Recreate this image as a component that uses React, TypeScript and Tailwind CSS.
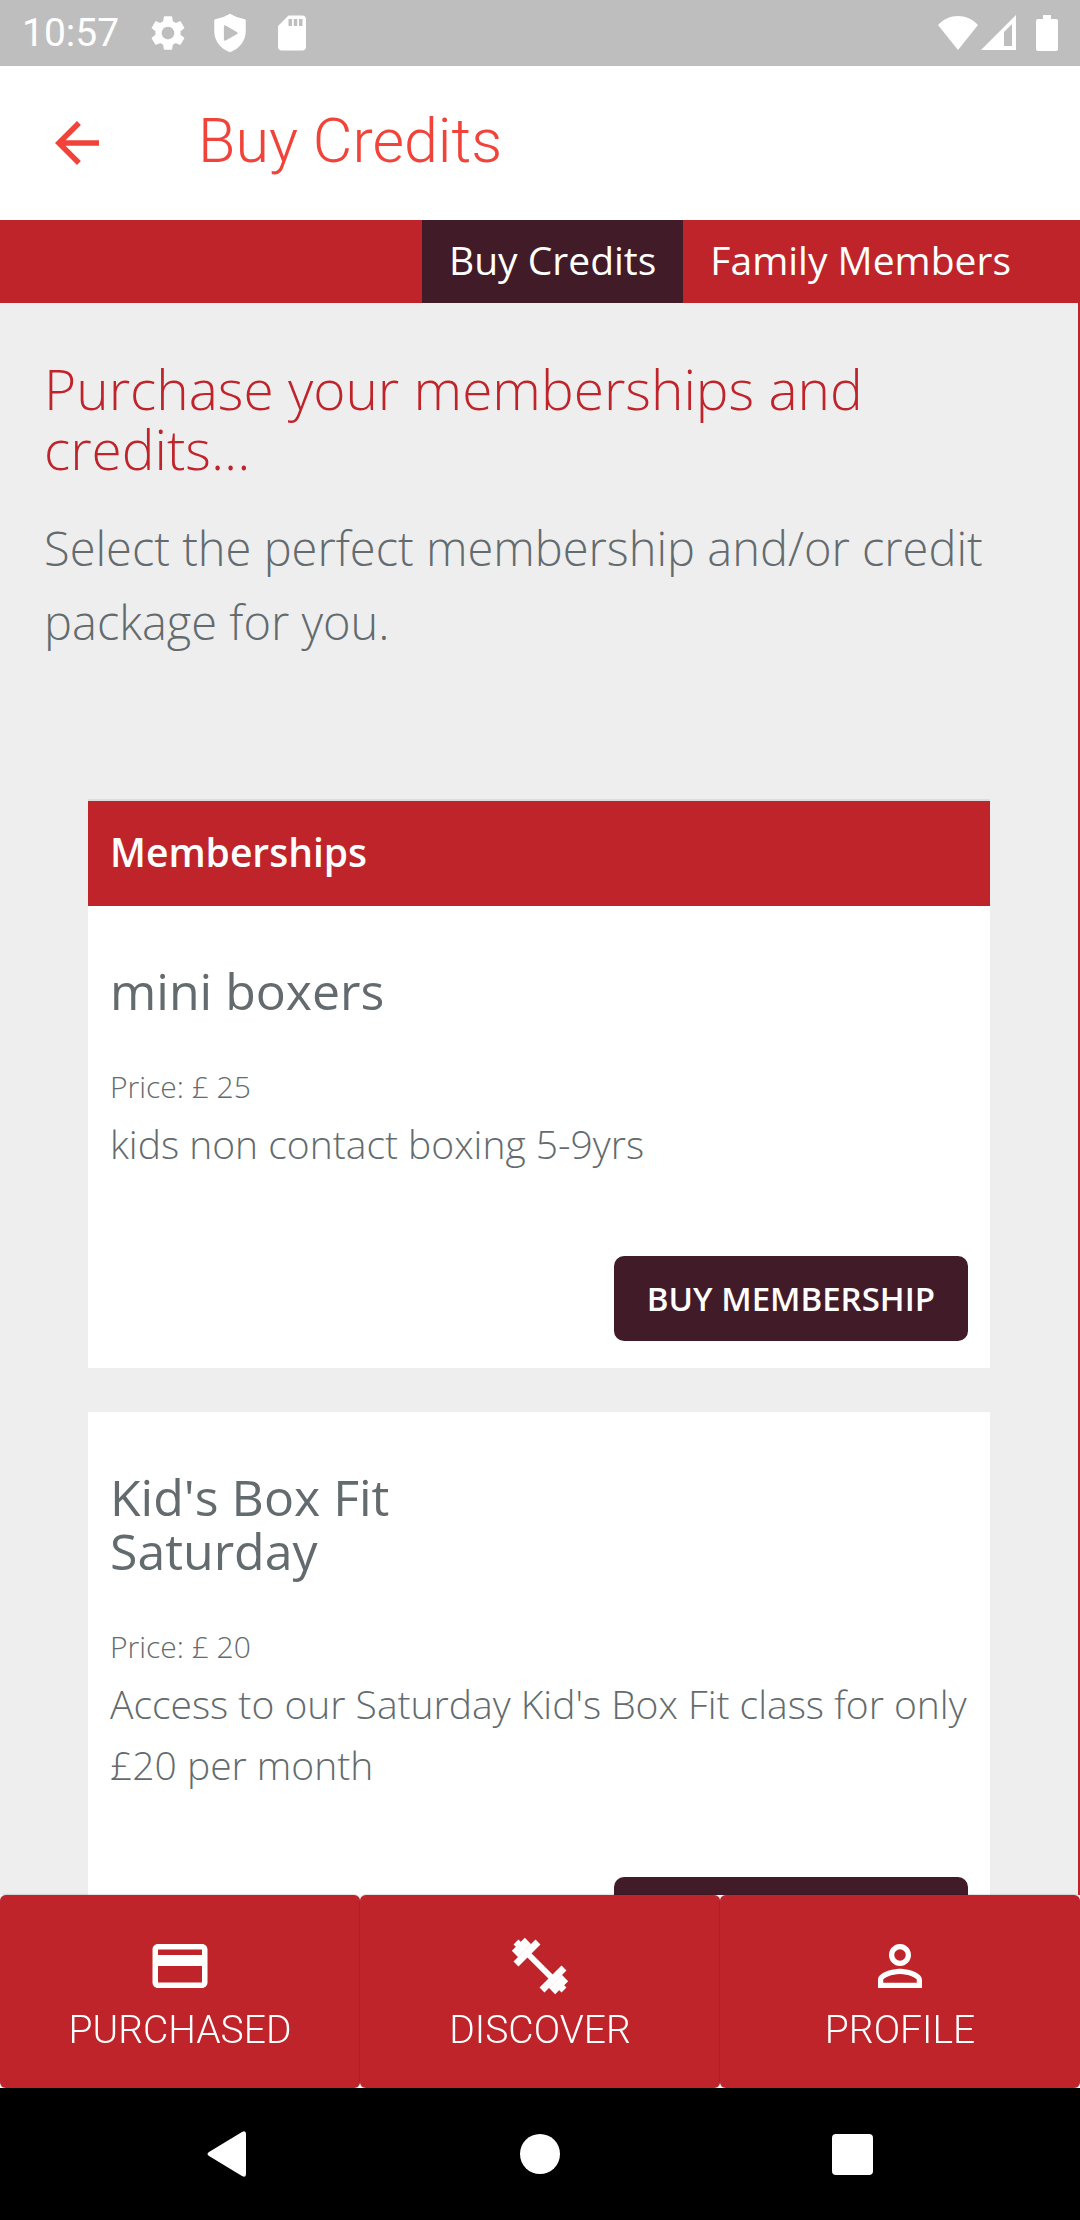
import type { ReactNode } from 'react';
import { MdArrowBack, MdCreditCard, MdPersonOutline, MdSdCard, MdSettings } from 'react-icons/md';

type Membership = {
  id: string;
  name: string;
  price: number;
  description: string;
};

const memberships: Membership[] = [
  {
    id: 'mini-boxers',
    name: 'mini boxers',
    price: 25,
    description: 'kids non contact boxing 5-9yrs',
  },
  {
    id: 'box-fit-saturday',
    name: 'Kid\'s Box Fit Saturday',
    price: 20,
    description: 'Access to our Saturday Kid\'s Box Fit class for only £20 per month',
  },
];

function StatusBar() {
  return (
    <div className="flex h-[66px] shrink-0 items-center justify-between bg-[#bebebe] px-[22px] text-white">
      <div className="flex items-center gap-5">
        <span className="mr-2 text-[39px] leading-none">10:57</span>
        <MdSettings className="h-[42px] w-[42px]" />
        <svg viewBox="0 0 24 24" className="h-[42px] w-[42px]" fill="currentColor" fillRule="evenodd">
          <path d="M12 1q-4 2.500-8.500 3.200-.5.1-.5.8v6c0 5.500 3.800 10.200 9 12 5.200-1.800 9-6.500 9-12V5q0-.7-.5-.8Q16 3.500 12 1zM8.500 8.400q0-1.200 1-.7l6.600 3.800q.8.500 0 1l-6.600 3.800q-1 .5-1-.7z" />
        </svg>
        <MdSdCard className="h-[42px] w-[42px]" />
      </div>
      <div className="flex items-center">
        <svg viewBox="0 0 40 36" className="h-9 w-10" fill="currentColor">
          <path d="M0 10C11-2 29-2 40 10L20 35z" />
        </svg>
        <svg viewBox="0 0 36 36" className="ml-0.5 h-9 w-9" fill="currentColor" fillRule="evenodd">
          <path d="M1 35 36 0v35zM24 17v14h8V9z" />
        </svg>
        <svg viewBox="0 0 22 36" className="ml-5 h-9 w-[22px]" fill="currentColor">
          <path d="M7 0h8v4h5a2 2 0 0 1 2 2v28a2 2 0 0 1-2 2H2a2 2 0 0 1-2-2V6a2 2 0 0 1 2-2h5z" />
        </svg>
      </div>
    </div>
  );
}

function DumbbellIcon() {
  return (
    <svg viewBox="0 0 66 66" className="h-[66px] w-[66px]" fill="none" stroke="currentColor" strokeWidth="7">
      <path d="M9 9l6 6M9 31 31 9M57 57l-6-6M35 57l22-22" />
      <path d="M8 21 21 8M45 58l13-13" strokeWidth="9" />
      <path d="M18 18l30 30" strokeWidth="6" />
    </svg>
  );
}

function MembershipCard({ membership }: { membership: Membership }) {
  return (
    <article className="bg-white px-[22px] pt-[58px] pb-[27px]">
      <h3 className="w-1/2 text-[50px] leading-[54px]">{membership.name}</h3>
      <p className="mt-[43px] text-[30px] leading-[52px] font-light">
        {`Price: £ ${membership.price}`}
      </p>
      <p className="text-[39px] leading-[61px] font-light">{membership.description}</p>
      <div className="mt-[82px] flex justify-end">
        <button
          type="button"
          className="h-[85px] rounded-[10px] bg-[#421b29] px-[33px] text-[33px] font-semibold text-white uppercase"
        >
          Buy Membership
        </button>
      </div>
    </article>
  );
}

function BottomTab({ icon, label }: { icon: ReactNode; label: string }) {
  return (
    <button
      type="button"
      className="flex flex-1 flex-col items-center rounded-md bg-[#c0242b] pt-[38px] font-light text-white uppercase shadow-[0_0_2px_rgba(0,0,0,0.4)]"
    >
      {icon}
      <span className="text-[39px] leading-[62px]">{label}</span>
    </button>
  );
}

export default function App() {
  return (
    <div className="flex h-screen flex-col bg-white font-['Roboto',sans-serif]">
      <StatusBar />

      <header className="flex h-[154px] shrink-0 items-center bg-white px-11 text-[#f0443a]">
        <button type="button" aria-label="Back">
          <MdArrowBack className="h-[66px] w-[66px]" />
        </button>
        <h1 className="ml-[88px] pb-1 text-[61px] leading-[70px] font-light">Buy Credits</h1>
      </header>

      <nav className="flex h-[83px] shrink-0 justify-end bg-[#c0242b] pr-[42px] font-['Open_Sans',sans-serif] text-[39px] text-white">
        <a href="#buy" className="flex items-center bg-[#421b29] px-[27px] pb-0.5">Buy Credits</a>
        <a href="#family" className="flex items-center px-[27px] pb-0.5">Family Members</a>
      </nav>

      <main className="min-h-0 flex-1 overflow-y-auto border-r-2 border-[#c0242b] bg-[#eee] px-11 font-['Open_Sans',sans-serif] text-[#636b6e] [scrollbar-width:none]">
        <h2 className="pt-14 text-[55px] leading-[60px] font-light text-[#c0242b]">
          Purchase your memberships and credits...
        </h2>
        <p className="mt-8 text-[47px] leading-[74px] font-light">
          Select the perfect membership and/or credit package for you.
        </p>

        <section className="mx-11 mt-[140px] pb-11">
          <h2 className="border-t-2 border-[#ddd] bg-[#c0242b] px-[22px] pb-1 text-[39px] leading-[101px] font-semibold text-white">
            Memberships
          </h2>
          <div className="flex flex-col gap-11">
            {memberships.map(membership => (
              <MembershipCard key={membership.id} membership={membership} />
            ))}
          </div>
        </section>
      </main>

      <nav className="flex h-[193px] shrink-0">
        <BottomTab icon={<MdCreditCard className="h-[66px] w-[66px]" />} label="Purchased" />
        <BottomTab icon={<DumbbellIcon />} label="Discover" />
        <BottomTab icon={<MdPersonOutline className="h-[66px] w-[66px]" />} label="Profile" />
      </nav>

      <div className="flex h-[132px] shrink-0 items-center justify-between bg-black px-[207px] text-white">
        <button type="button" aria-label="Go back">
          <svg viewBox="0 0 40 46" className="h-[46px] w-10" fill="currentColor">
            <path d="M2 21 35 1q4-2 4 2v40q0 4-4 2L2 25q-3-2 0-4z" />
          </svg>
        </button>
        <button type="button" aria-label="Home" className="h-10 w-10 rounded-full bg-white" />
        <button type="button" aria-label="Recent apps" className="h-[41px] w-[41px] rounded-sm bg-white" />
      </div>
    </div>
  );
}
